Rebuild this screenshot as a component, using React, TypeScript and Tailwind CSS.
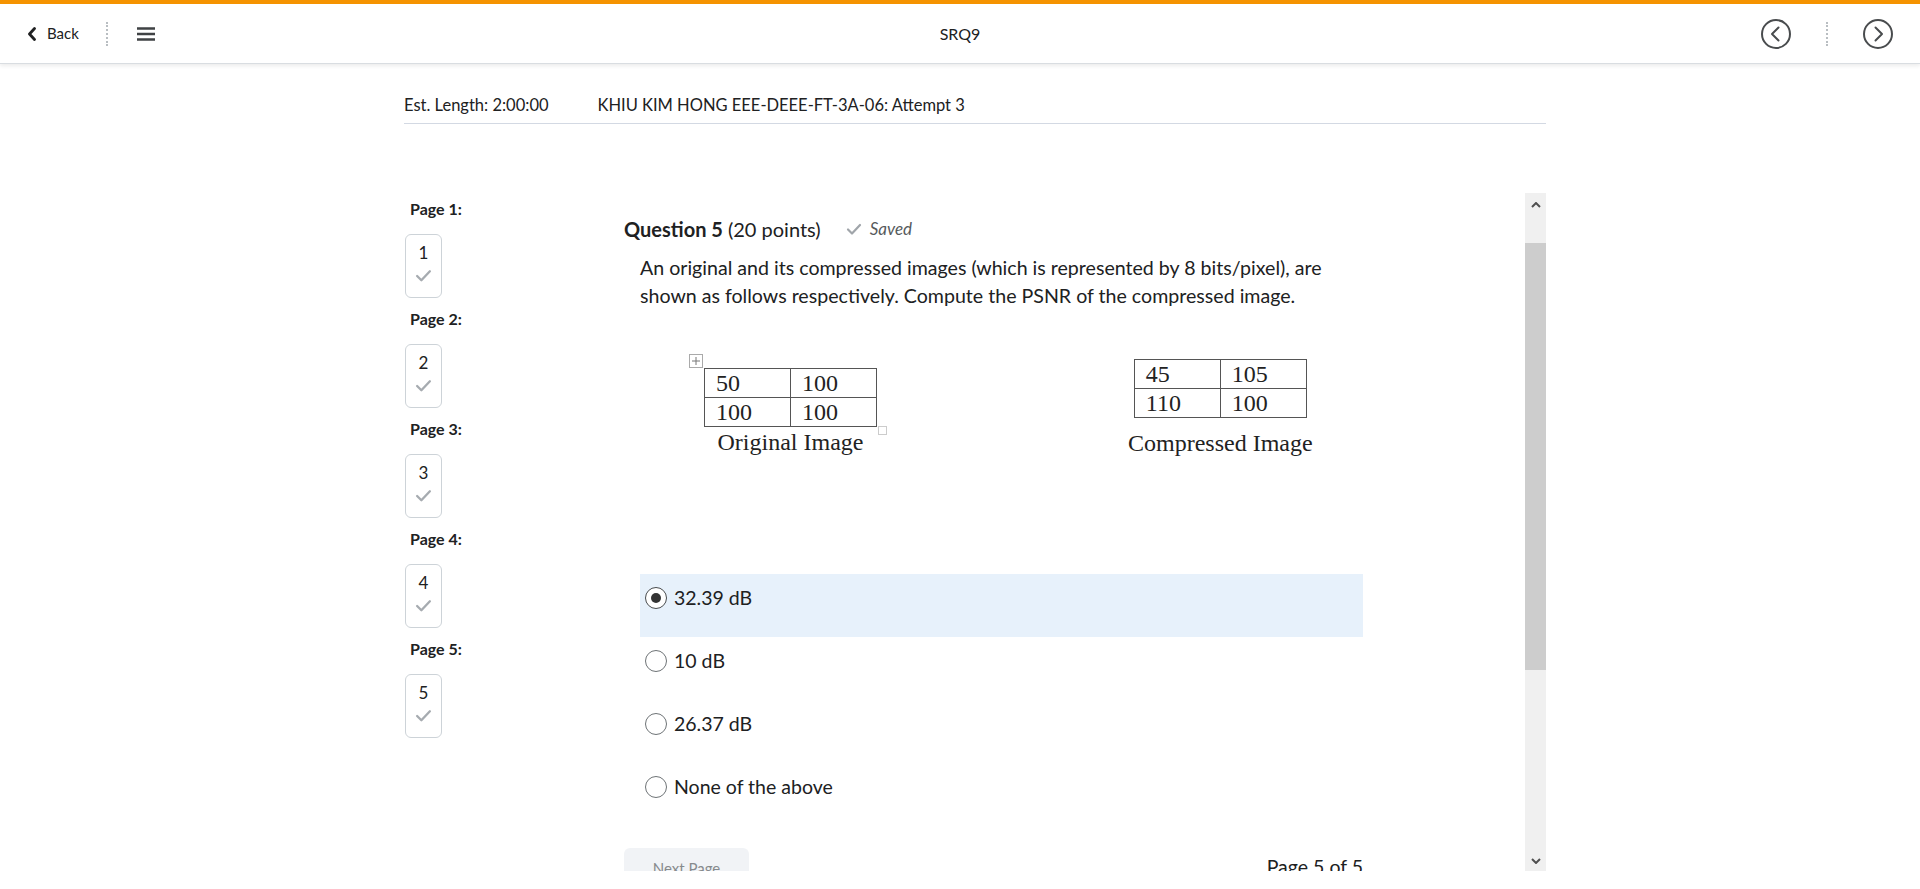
const pages = [1, 2, 3, 4, 5];

const options = [
    { label: "32.39 dB", selected: true },
    { label: "10 dB", selected: false },
    { label: "26.37 dB", selected: false },
    { label: "None of the above", selected: false },
];

function Check({ className = "" }: { className?: string }) {
    return (
        <svg viewBox="0 0 16 16" className={className} fill="none">
            <path
                d="M2 8.5l4 4 8-8.5"
                stroke="currentColor"
                strokeWidth="2.2"
                strokeLinecap="round"
                strokeLinejoin="round"
            />
        </svg>
    );
}

function CircleArrow({ dir }: { dir: "left" | "right" }) {
    return (
        <svg viewBox="0 0 30 30" className="w-[30px] h-[30px]" fill="none">
            <circle cx="15" cy="15" r="14" stroke="#494c4e" strokeWidth="2" />
            <path
                d={dir === "left" ? "M17.5 8.5l-6.5 6.5 6.5 6.5" : "M12.5 8.5l6.5 6.5-6.5 6.5"}
                stroke="#494c4e"
                strokeWidth="2"
                strokeLinecap="round"
                strokeLinejoin="round"
            />
        </svg>
    );
}

function DottedDivider() {
    return <div className="h-[24px] w-0 border-l-2 border-dotted border-[#b9bec2]" />;
}

function Grid({ cells }: { cells: string[][] }) {
    return (
        <table className="border-collapse border border-[#3a3a3a] text-[24px] leading-[28px] text-[#222]">
            <tbody>
                {cells.map((row, r) => (
                    <tr key={r}>
                        {row.map((c, i) => (
                            <td
                                key={i}
                                className="border border-[#555] w-[86px] h-[28px] pl-[11px] align-middle"
                            >
                                {c}
                            </td>
                        ))}
                    </tr>
                ))}
            </tbody>
        </table>
    );
}

export default function App() {
    return (
        <div className="min-h-screen bg-white text-[#202122] font-['Lato','Liberation_Sans',sans-serif]">
            {/* Top nav bar */}
            <header className="h-16 border-t-4 border-[#f59300] border-b border-b-[#d9dde1] shadow-[0_2px_4px_rgba(0,0,0,0.08)] grid grid-cols-[1fr_auto_1fr] items-center px-[27px]">
                <div className="flex items-center">
                    <svg viewBox="0 0 10 14" className="w-[10px] h-[14px]" fill="none">
                        <path
                            d="M7.5 1.5L2.5 7l5 5.5"
                            stroke="#202122"
                            strokeWidth="2.8"
                            strokeLinecap="round"
                            strokeLinejoin="round"
                        />
                    </svg>
                    <span className="ml-[10px] text-[15px] text-[#202122]">Back</span>
                    <div className="ml-[27px]">
                        <DottedDivider />
                    </div>
                    <svg viewBox="0 0 18 14" className="ml-[29px] w-[18px] h-[14px]" fill="none">
                        <path d="M0 1.5h18M0 7h18M0 12.5h18" stroke="#3f4244" strokeWidth="2.4" />
                    </svg>
                </div>
                <div className="text-[16px] text-[#202122]">SRQ9</div>
                <div className="flex items-center justify-end">
                    <CircleArrow dir="left" />
                    <div className="mx-[35px]">
                        <DottedDivider />
                    </div>
                    <CircleArrow dir="right" />
                </div>
            </header>

            <main className="pl-[404px] pr-[374px]">
                <div className="mt-[29px] h-[31px] border-b border-[#d3d9e3] flex text-[16.5px] leading-6 text-[#202122]">
                    <span>Est. Length: 2:00:00</span>
                    <span className="ml-[49px]">KHIU KIM HONG EEE-DEEE-FT-3A-06: Attempt 3</span>
                </div>

                <div className="mt-[69px] h-[678px] overflow-hidden flex">
                    {/* Page navigation */}
                    <nav className="w-[220px] pl-[1px] pt-[6px] shrink-0">
                        {pages.map((p) => (
                            <div key={p} className="mb-[11px]">
                                <div className="pl-[5px] text-[16px] leading-5 font-bold mb-[15px]">
                                    Page {p}:
                                </div>
                                <div className="w-[37px] h-[64px] rounded-[6px] border border-[#cdd3d8] flex flex-col items-center pt-[7px]">
                                    <span className="text-[17px] leading-[22px]">{p}</span>
                                    <Check className="mt-[3px] w-[17px] h-[17px] text-[#a6abb0]" />
                                </div>
                            </div>
                        ))}
                    </nav>

                    {/* Question */}
                    <section className="w-[739px] shrink-0 pt-[22px]">
                        <div className="flex items-center h-[28px]">
                            <h2 className="text-[20px] font-bold">Question 5</h2>
                            <span className="ml-[5px] text-[20px]">(20 points)</span>
                            <Check className="ml-[25px] w-[16px] h-[16px] text-[#a0a5aa]" />
                            <span className="ml-[8px] text-[17px] italic text-[#565a5c]">Saved</span>
                        </div>

                        <p className="ml-[16px] mt-[11px] text-[19.6px] leading-[28px] w-[700px]">
                            An original and its compressed images (which is represented by 8 bits/pixel), are shown as follows respectively. Compute the PSNR of the compressed image.
                        </p>

                        <div className="h-[264px] flex items-start font-['Liberation_Serif','Times_New_Roman',serif]">
                            <div className="ml-[80px] mt-[58px] relative flex flex-col items-center">
                                <div className="absolute -left-[15px] -top-[14px] w-[14px] h-[14px] border border-[#aaa] bg-white flex items-center justify-center">
                                    <svg viewBox="0 0 10 10" className="w-[10px] h-[10px]" fill="none">
                                        <path d="M5 1v8M1 5h8" stroke="#777" strokeWidth="1" />
                                    </svg>
                                </div>
                                <Grid cells={[["50", "100"], ["100", "100"]]} />
                                <div className="absolute -right-[10px] top-[58px] w-[9px] h-[9px] border border-[#ccc]" />
                                <div className="text-[24px] leading-[30px] text-[#222]">Original Image</div>
                            </div>
                            <div className="ml-[251px] mt-[49px] flex flex-col items-center">
                                <Grid cells={[["45", "105"], ["110", "100"]]} />
                                <div className="mt-[10px] text-[24px] leading-[30px] text-[#222] whitespace-nowrap">
                                    Compressed Image
                                </div>
                            </div>
                        </div>

                        <div className="ml-[16px] w-[723px]">
                            {options.map((o) => (
                                <label
                                    key={o.label}
                                    className={`h-[63px] flex items-start pt-[12px] pl-[5px] ${o.selected ? "bg-[#e7f1fb]" : ""}`}
                                >
                                    <span className="flex items-center h-[23px]">
                                        <span
                                            className={`w-[22px] h-[22px] rounded-full bg-white flex items-center justify-center border ${o.selected ? "border-[#494c4e]" : "border-[#6e7376]"}`}
                                        >
                                            {o.selected && <span className="w-[10px] h-[10px] rounded-full bg-[#333]" />}
                                        </span>
                                        <span className="ml-[7px] text-[19.5px]">{o.label}</span>
                                    </span>
                                </label>
                            ))}
                        </div>

                        <div className="mt-[22px] flex items-start justify-between">
                            <button className="w-[125px] h-[40px] rounded-[6px] bg-[#f1f3f6] text-[15px] text-[#868a8d]">
                                Next Page
                            </button>
                            <span className="mt-[5px] text-[19.5px] leading-[28px]">Page 5 of 5</span>
                        </div>
                    </section>

                    <div className="flex-1" />

                    {/* Scrollbar */}
                    <div className="w-[21px] h-full bg-[#f0f0f0] flex flex-col items-center">
                        <svg viewBox="0 0 10 6" className="mt-[9px] w-[10px] h-[6px]" fill="none">
                            <path d="M1 5l4-4 4 4" stroke="#505050" strokeWidth="2" />
                        </svg>
                        <div className="mt-[35px] w-full h-[427px] bg-[#cdcdcd]" />
                        <div className="flex-1" />
                        <svg viewBox="0 0 10 6" className="mb-[7px] w-[10px] h-[6px]" fill="none">
                            <path d="M1 1l4 4 4-4" stroke="#505050" strokeWidth="2" />
                        </svg>
                    </div>
                </div>
            </main>
        </div>
    );
}
